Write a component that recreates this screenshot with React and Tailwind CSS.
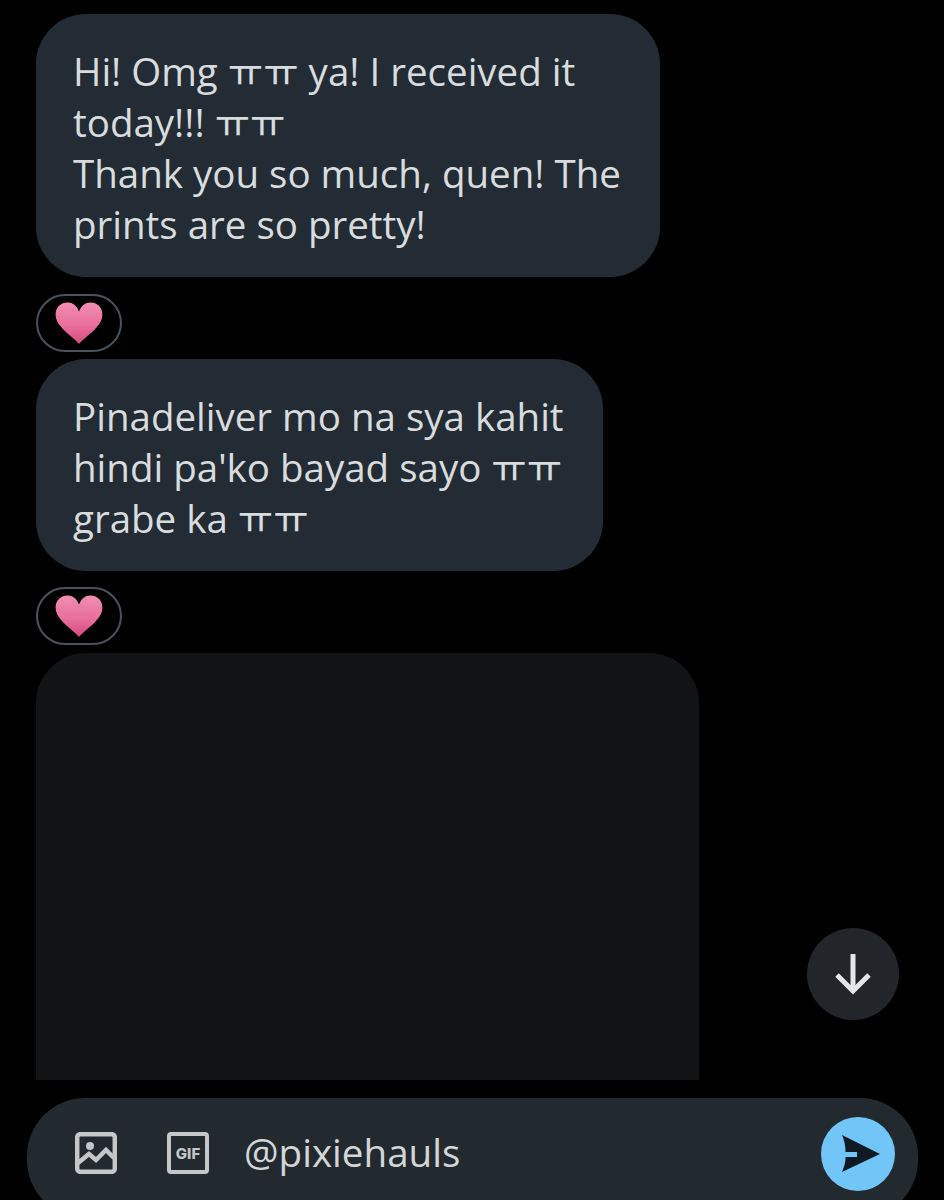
const FONT = "font-['Open_Sans','Noto_Sans_CJK_KR',sans-serif]";

const Heart = ({ id }) => (
  <svg width="48" height="42" viewBox="0 0 50 44">
    <defs>
      <linearGradient id={id} x1="0" y1="0" x2="0" y2="1">
        <stop offset="0" stopColor="#f08fb0" />
        <stop offset="0.55" stopColor="#e96f9c" />
        <stop offset="1" stopColor="#d64a80" />
      </linearGradient>
    </defs>
    <path
      d="M25 44C21 39 13 34 7 27C2.500 22 0.500 18 0.500 13C0.500 5.500 6 0.500 13 0.500C18.500 0.500 22.500 3.500 25 10C27.500 3.500 31.500 0.500 37 0.500C44 0.500 49.500 5.500 49.500 13C49.500 18 47.500 22 43 27C37 34 29 39 25 44Z"
      fill={`url(#${id})`}
    />
  </svg>
);

const Reaction = ({ id }) => (
  <div className="flex h-[58px] w-[86px] items-center justify-center rounded-full border-2 border-[#48525a]">
    <Heart id={id} />
  </div>
);

const Bubble = ({ lines }) => (
  <div className="w-fit rounded-[50px] bg-[#232c34] pb-[27px] pl-[37px] pr-[39px] pt-[32px] text-[38.500px] leading-[51px] text-[#d9dcde]">
    {lines.map((line) => (
      <div key={line} className="whitespace-nowrap">{line}</div>
    ))}
  </div>
);

const App = () => {
  return (
    <div className={`relative flex h-[1200px] w-[944px] flex-col overflow-hidden bg-black pt-[14px] ${FONT}`}>
      <div className="flex flex-col pl-[36px]">
        <Bubble lines={['Hi! Omg ㅠㅠ ya! I received it', 'today!!! ㅠㅠ', 'Thank you so much, quen! The', 'prints are so pretty!']} />
        <div className="mb-[7px] mt-[17px]"><Reaction id="heart-a" /></div>
        <Bubble lines={['Pinadeliver mo na sya kahit', "hindi pa'ko bayad sayo ㅠㅠ", 'grabe ka ㅠㅠ']} />
        <div className="mb-[8px] mt-[16px]"><Reaction id="heart-b" /></div>
        <div className="h-[427px] w-[663px] rounded-t-[50px] bg-[#111314]" />
      </div>

      {/* scroll to latest */}
      <button className="absolute left-[807px] top-[928px] flex h-[92px] w-[92px] items-center justify-center rounded-full bg-[#22262b]">
        <svg width="36" height="42" viewBox="0 0 36 42" fill="none" stroke="#e4e6e7" strokeWidth="5">
          <path d="M18 1V38" />
          <path d="M2 22L18 38L34 22" />
        </svg>
      </button>

      {/* composer */}
      <div className="ml-[27px] mt-[18px] flex h-[120px] w-[891px] shrink-0 items-start rounded-[58px] bg-[#22292f] pt-[14px]">
        <svg className="ml-[48px] mt-[20px] shrink-0" width="42" height="42" viewBox="0 0 42 42" fill="none" stroke="#c4c6c7" strokeWidth="4.500">
          <rect x="2.200" y="2.200" width="37.600" height="37.600" rx="3" />
          <circle cx="15" cy="14" r="4" fill="#c4c6c7" stroke="none" />
          <path d="M3 31L14 22L21 28L31 18L39 26" />
        </svg>
        <div className="ml-[50px] mt-[20px] flex h-[42px] w-[42px] shrink-0 items-center justify-center rounded-[4px] border-[4px] border-[#c4c6c7] font-['Inter',sans-serif] text-[15px] font-extrabold leading-none text-[#c4c6c7]">
          GIF
        </div>
        <div className="ml-[35px] mt-[15px] flex-1 text-[38.600px] leading-[51px] text-[#d3d6d8]">@pixiehauls</div>
        <div className="ml-auto mr-[23px] mt-[5px] flex h-[74px] w-[74px] shrink-0 items-center justify-center rounded-full bg-[#72c6f7]">
          <svg className="ml-[5px]" width="38" height="38" viewBox="0 0 38 38">
            <path d="M0 0L38 19L0 37C3 30 3.500 26 3.500 22H15V17H3.500C3.500 12 3 7 0 0Z" fill="#0f1a24" />
          </svg>
        </div>
      </div>
    </div>
  );
};

export default App;
